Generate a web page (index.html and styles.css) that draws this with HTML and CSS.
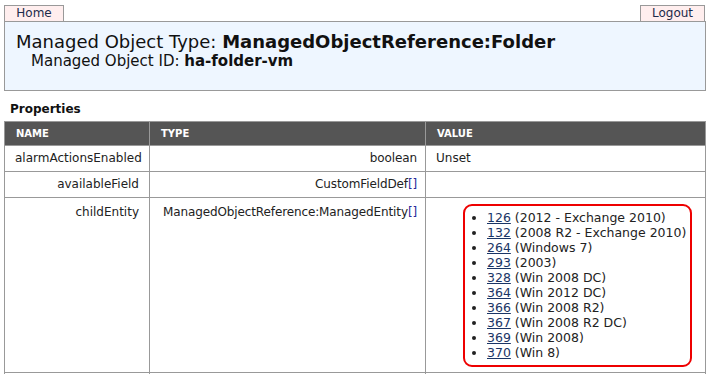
FILE: index.html
```html
<!DOCTYPE html>
<html lang="en">
<head>
    <meta charset="UTF-8">
    <title>Managed Object Browser</title>
    <link rel="stylesheet" href="styles.css">
</head>
<body>

    <div class="tabs">
        <a class="tab" href="#">Home</a>
        <a class="tab tab-logout" href="#">Logout</a>
    </div>

    <div class="object-header">
        <h1>Managed Object Type: <strong>ManagedObjectReference:Folder</strong></h1>
        <h2>Managed Object ID: <strong>ha-folder-vm</strong></h2>
    </div>

    <h3 class="section-title">Properties</h3>
    <table class="props">
        <colgroup>
            <col class="col-name">
            <col class="col-type">
            <col>
        </colgroup>
        <thead>
            <tr>
                <th>NAME</th>
                <th>TYPE</th>
                <th>VALUE</th>
            </tr>
        </thead>
        <tbody>
            <tr>
                <td class="name">alarmActionsEnabled</td>
                <td class="type">boolean</td>
                <td>Unset</td>
            </tr>
            <tr>
                <td class="name">availableField</td>
                <td class="type">CustomFieldDef<span class="brackets">[]</span></td>
                <td></td>
            </tr>
            <tr class="tall">
                <td class="name">childEntity</td>
                <td class="type">ManagedObjectReference:ManagedEntity<span class="brackets">[]</span></td>
                <td class="value-list">
                    <ul class="entities">
                        <li><a href="#">126</a> (2012 - Exchange 2010)</li>
                        <li><a href="#">132</a> (2008 R2 - Exchange 2010)</li>
                        <li><a href="#">264</a> (Windows 7)</li>
                        <li><a href="#">293</a> (2003)</li>
                        <li><a href="#">328</a> (Win 2008 DC)</li>
                        <li><a href="#">364</a> (Win 2012 DC)</li>
                        <li><a href="#">366</a> (Win 2008 R2)</li>
                        <li><a href="#">367</a> (Win 2008 R2 DC)</li>
                        <li><a href="#">369</a> (Win 2008)</li>
                        <li><a href="#">370</a> (Win 8)</li>
                    </ul>
                </td>
            </tr>
            <tr>
                <td class="name"></td>
                <td class="type"></td>
                <td></td>
            </tr>
        </tbody>
    </table>

</body>
</html>
```

FILE: styles.css
```css
body {
    font-family: "DejaVu Sans", Verdana, sans-serif;
    font-size: 12px;
    color: #222;
    margin: 5px 4px;
}
.tabs {
    display: flex;
    justify-content: space-between;
    align-items: flex-end;
}
.tab {
    display: block;
    background: #ffeeee;
    border: 1px solid #999;
    border-bottom: none;
    color: #1c2a4a;
    text-decoration: none;
    font-size: 12px;
    line-height: 15px;
    padding: 0 8px;
    width: 42px;
    text-align: center;
}
.tab-logout {
    width: 47px;
    margin-right: 1px;
}
.object-header {
    background: #eef6ff;
    border: 1px solid #999;
    height: 68px;
    padding: 0 11px;
}
.object-header h1 {
    font-size: 18px;
    font-weight: normal;
    color: #111;
    margin: 9px 0 0 0;
    line-height: 21px;
}
.object-header h2 {
    font-size: 15px;
    font-weight: normal;
    color: #111;
    margin: 0 0 0 15px;
    line-height: 18px;
}
.section-title {
    font-size: 12px;
    margin: 11px 0 5px 6px;
    color: #111;
}
.props {
    width: 100%;
    border-collapse: collapse;
    table-layout: fixed;
}
.props .col-name {
    width: 145px;
}
.props .col-type {
    width: 276px;
}
.props th {
    background: #555;
    color: #fff;
    font-size: 10px;
    text-align: left;
    height: 23px;
    padding: 0 11px;
    border: 1px solid #999;
}
.props td {
    border: 1px solid #999;
    padding: 4px 10px;
    height: 17px;
    vertical-align: top;
    line-height: 17px;
    white-space: nowrap;
}
.props td.name,
.props td.type {
    text-align: right;
}
.props td.type {
    padding-right: 8px;
    letter-spacing: -0.12px;
}
.brackets {
    color: #2a2a9a;
}
.props tr.tall td {
    height: 164px;
    padding-top: 6px;
}
.props td.value-list {
    padding: 10px 0 0 37px;
}
.entities {
    display: inline-block;
    margin: 0;
    padding: 4px 4px 5px 22px;
    border: 2px solid #ee0000;
    border-radius: 9px;
    font-size: 12.5px;
    line-height: 15px;
}
.entities a {
    color: #1a3566;
}
```
